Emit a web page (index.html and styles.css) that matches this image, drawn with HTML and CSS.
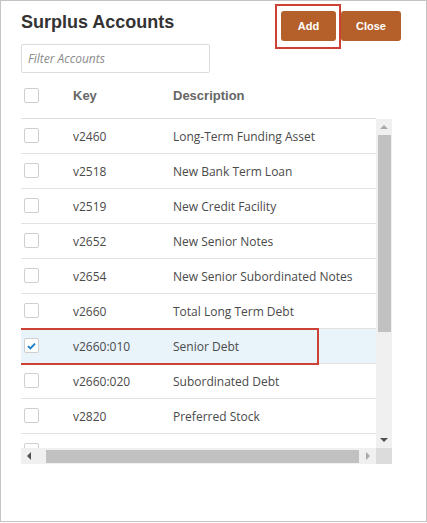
FILE: index.html
```html
<!DOCTYPE html>
<html>
<head>
<meta charset="utf-8">
<link rel="stylesheet" href="styles.css">
</head>
<body>
<div class="dialog">
  <div class="top">
    <h1 class="title">Surplus Accounts</h1>
    <div class="actions">
      <div class="btn-wrap">
        <button class="btn">Add</button>
        <span class="hl hl-btn"></span>
      </div>
      <button class="btn btn-close">Close</button>
    </div>
  </div>
  <div class="filter">
    <input class="filter-input" type="text" placeholder="Filter Accounts">
  </div>
  <div class="thead">
    <span class="cb"></span>
    <span class="col-key">Key</span>
    <span class="col-desc">Description</span>
  </div>
  <div class="grid">
    <div class="viewport">
      <div class="row"><span class="cb"></span><span class="col-key">v2460</span><span class="col-desc">Long-Term Funding Asset</span></div>
      <div class="row"><span class="cb"></span><span class="col-key">v2518</span><span class="col-desc">New Bank Term Loan</span></div>
      <div class="row"><span class="cb"></span><span class="col-key">v2519</span><span class="col-desc">New Credit Facility</span></div>
      <div class="row"><span class="cb"></span><span class="col-key">v2652</span><span class="col-desc">New Senior Notes</span></div>
      <div class="row"><span class="cb"></span><span class="col-key">v2654</span><span class="col-desc">New Senior Subordinated Notes</span></div>
      <div class="row"><span class="cb"></span><span class="col-key">v2660</span><span class="col-desc">Total Long Term Debt</span></div>
      <div class="row selected"><span class="cb checked"><svg viewBox="0 0 14 14" width="14" height="14"><path d="M3.2 7.2 L5.8 9.6 L10.8 4.4" fill="none" stroke="#1b7fcc" stroke-width="2"/></svg></span><span class="col-key">v2660:010</span><span class="col-desc">Senior Debt</span><span class="hl hl-row"></span></div>
      <div class="row"><span class="cb"></span><span class="col-key">v2660:020</span><span class="col-desc">Subordinated Debt</span></div>
      <div class="row"><span class="cb"></span><span class="col-key">v2820</span><span class="col-desc">Preferred Stock</span></div>
      <div class="row"><span class="cb"></span></div>
    </div>
    <div class="vscroll">
      <span class="arrow up light"></span>
      <span class="vthumb"></span>
      <span class="arrow down"></span>
    </div>
    <div class="hscroll">
      <span class="arrow left"></span>
      <span class="hthumb"></span>
      <span class="arrow right light"></span>
    </div>
    <div class="corner"></div>
  </div>
</div>
</body>
</html>
```
FILE: styles.css
```css
html, body {
  margin: 0;
  padding: 0;
  background: #fff;
}
.dialog {
  box-sizing: border-box;
  width: 427px;
  height: 522px;
  border: 1px solid #c4c4c4;
  padding: 0 34px 0 20px;
  font-family: "Open Sans", "Liberation Sans", sans-serif;
  color: #444;
}
.top {
  display: flex;
  justify-content: space-between;
  align-items: flex-start;
  height: 43px;
}
.title {
  margin: 10px 0 0 0;
  font-family: "Liberation Sans", Arial, sans-serif;
  font-size: 18px;
  font-weight: bold;
  color: #333;
  line-height: 22px;
}
.actions {
  display: flex;
  gap: 5px;
  margin-top: 10px;
  margin-right: -9px;
}
.btn-wrap {
  position: relative;
  display: flex;
}
.btn {
  width: 55px;
  height: 30px;
  border: none;
  border-radius: 3px;
  background: #b5602a;
  color: #fff;
  font-family: "Liberation Sans", Arial, sans-serif;
  font-weight: bold;
  font-size: 11px;
  padding: 0;
}
.btn-close {
  width: 60px;
}
.hl {
  position: absolute;
  border: 2px solid #cc4134;
  pointer-events: none;
}
.hl-btn {
  left: -6px;
  top: -7px;
  width: 62px;
  height: 41px;
}
.filter {
  display: flex;
}
.filter-input {
  box-sizing: border-box;
  width: 189px;
  height: 29px;
  border: 1px solid #dcdcdc;
  border-radius: 2px;
  padding: 0 6px;
  font-family: "Open Sans", sans-serif;
  font-size: 12px;
  font-style: italic;
  outline: none;
}
.filter-input::placeholder {
  color: #8a8a8a;
}
.thead {
  display: flex;
  align-items: center;
  width: 355px;
  height: 45px;
  border-bottom: 1px solid #dedede;
  font-family: "Liberation Sans", Arial, sans-serif;
  font-weight: bold;
  font-size: 13px;
  color: #666;
}
.cb {
  box-sizing: border-box;
  flex: none;
  width: 15px;
  height: 15px;
  margin-left: 3px;
  border: 1px solid #cfcfcf;
  border-radius: 2px;
  background: #fff;
  display: flex;
  align-items: center;
  justify-content: center;
}
.cb svg {
  display: block;
}
.col-key {
  width: 100px;
  margin-left: 34px;
  flex: none;
}
.col-desc {
  flex: none;
  white-space: nowrap;
}
.grid {
  display: grid;
  grid-template-columns: 355px 16px;
  grid-template-rows: 329px 16px;
  width: 371px;
}
.viewport {
  overflow: hidden;
}
.row {
  position: relative;
  box-sizing: border-box;
  display: flex;
  align-items: center;
  height: 35px;
  border-bottom: 1px solid #e2e2e2;
  font-size: 12px;
  color: #4a4a4a;
}
.row .cb {
  margin-top: -1px;
}
.row.selected {
  background: #e8f3fa;
}
.hl-row {
  left: -3px;
  top: -1px;
  width: 297px;
  height: 33px;
}
.vscroll {
  background: #f0f0f0;
  display: flex;
  flex-direction: column;
  align-items: center;
}
.vthumb {
  width: 13px;
  height: 197px;
  margin-left: 0;
  background: #c1c1c1;
}
.hscroll {
  background: #f0f0f0;
  display: flex;
  align-items: center;
}
.hthumb {
  width: 313px;
  height: 13px;
  margin-left: 9px;
  background: #c1c1c1;
}
.corner {
  background: #dcdcdc;
}
.arrow {
  width: 0;
  height: 0;
  flex: none;
}
.up {
  margin: 6px 0 6px;
  border-left: 4px solid transparent;
  border-right: 4px solid transparent;
  border-bottom: 4px solid #505050;
}
.down {
  margin-top: auto;
  margin-bottom: 6px;
  border-left: 4px solid transparent;
  border-right: 4px solid transparent;
  border-top: 4px solid #505050;
}
.left {
  margin: 0 6px 0 6px;
  border-top: 4px solid transparent;
  border-bottom: 4px solid transparent;
  border-right: 4px solid #505050;
}
.right {
  margin-left: auto;
  margin-right: 6px;
  border-top: 4px solid transparent;
  border-bottom: 4px solid transparent;
  border-left: 4px solid #505050;
}
.up.light { border-bottom-color: #a8a8a8; }
.right.light { border-left-color: #a8a8a8; }
```
